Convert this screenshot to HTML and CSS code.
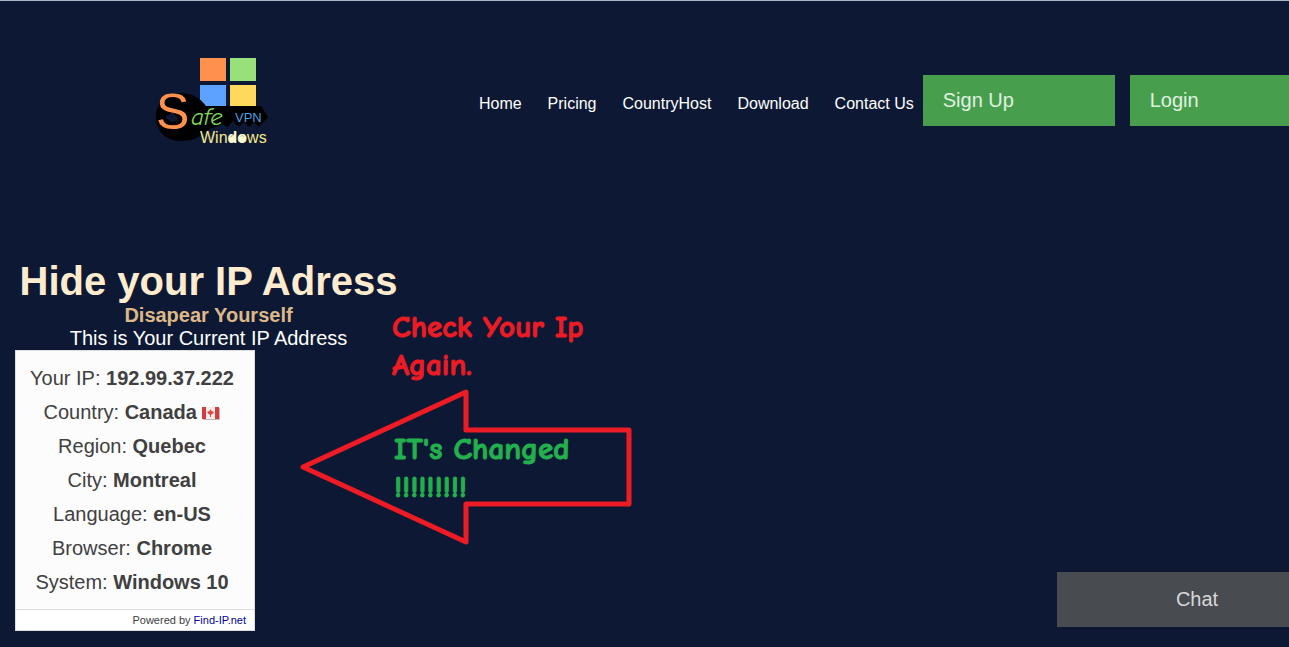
FILE: index.html
```html
<!DOCTYPE html>
<html lang="en">
<head>
<meta charset="utf-8">
<title>Safe VPN Windows</title>
<link rel="stylesheet" href="styles.css">
</head>
<body>
<header class="header">
  <a class="brand" href="#" aria-label="Safe VPN Windows">
    <svg class="logo" viewBox="0 0 140 120" width="140" height="120">
      <rect x="60" y="24" width="26" height="23" fill="#ff914d"/>
      <rect x="90" y="24" width="26" height="23" fill="#98e07a"/>
      <rect x="60" y="51" width="26" height="23" fill="#5ea2ff"/>
      <rect x="90" y="51" width="26" height="23" fill="#ffd95c"/>
      <path fill="#000" fill-rule="evenodd" d="M40 59C53 59 61 65 66 72H121L128 83L119 93L114 88L109 93L104 88L99 93L93 87L88 93L82 90L73 94C65 95 62 107 41 107C25 107 16 96 16 83C16 69 26 59 40 59ZM33 78L25 83L31 88L39 87Z"/>
      <text class="logo-s" x="16" y="95">S</text>
      <text class="logo-afe" x="51" y="91">afe</text>
      <text class="logo-vpn" x="95" y="88">VPN</text>
      <text class="logo-windows" x="60" y="109">Win<tspan class="logo-bold">do</tspan>ws</text>
      <circle cx="93" cy="105" r="3" fill="#fffbd0"/>
      <circle cx="102" cy="105" r="3" fill="#fffbd0"/>
    </svg>
  </a>
  <nav class="nav">
    <a href="#">Home</a>
    <a href="#">Pricing</a>
    <a href="#">CountryHost</a>
    <a href="#">Download</a>
    <a href="#">Contact Us</a>
  </nav>
  <div class="actions">
    <button class="action" type="button">Sign Up</button>
    <button class="action" type="button">Login</button>
  </div>
</header>
<main class="hero">
  <section class="intro">
    <h1 class="title">Hide your IP Adress</h1>
    <h2 class="subtitle">Disapear Yourself</h2>
    <p class="lead">This is Your Current IP Address</p>
    <div class="card">
      <ul class="facts">
        <li>Your IP: <b>192.99.37.222</b></li>
        <li>Country: <b>Canada</b>
          <svg class="flag" viewBox="0 0 18 13" width="18" height="13">
            <rect x="1" y="1" width="17" height="12" fill="#bbb"/>
            <rect width="17" height="12" fill="#f6eeee"/>
            <rect width="4" height="12" fill="#d93a3a"/>
            <rect x="13" width="4" height="12" fill="#d93a3a"/>
            <path d="M8.500 2L9.500 4L12 5L10 7.500H9V10H8V7.500H7L5 5L7.500 4Z" fill="#e04444"/>
          </svg></li>
        <li>Region: <b>Quebec</b></li>
        <li>City: <b>Montreal</b></li>
        <li>Language: <b>en-US</b></li>
        <li>Browser: <b>Chrome</b></li>
        <li>System: <b>Windows 10</b></li>
      </ul>
      <p class="credit">Powered by <a href="#">Find-IP.net</a></p>
    </div>
  </section>
  <aside class="callout">
    <p class="note note-check">Check Your Ip<br>Again.</p>
    <div class="arrow">
      <svg class="arrow-shape" viewBox="0 0 332 158" width="332" height="158">
        <path d="M3 79L166 4V42H329V116H166V154Z" fill="none" stroke="#ed1c24" stroke-width="5" stroke-linejoin="round"/>
      </svg>
      <p class="note note-changed">IT's Changed<br>!!!!!!!!!</p>
    </div>
  </aside>
</main>
<button class="chat" type="button">Chat</button>
</body>
</html>
```
FILE: styles.css
```css
* { box-sizing: border-box; }
body {
  margin: 0;
  min-height: 100vh;
  overflow: hidden;
  border-top: 1px solid #a9b3c6;
  background: #0d1934;
  color: #fff;
  font-family: "Liberation Sans", Arial, sans-serif;
  font-size: 20px;
  line-height: 23px;
}
h1, h2, p, ul { margin: 0; padding: 0; }
a { color: inherit; text-decoration: none; }
button { border: 0; font: inherit; cursor: pointer; }

.header {
  display: grid;
  grid-template-columns: 37% auto auto;
  justify-content: start;
  align-items: center;
  padding-top: 33px;
}
.brand { display: block; padding-left: 140px; }
.logo { display: block; }
.logo-s { font: 50px "Liberation Sans", sans-serif; fill: #ff914d; }
.logo-afe { font: italic 25px "Comic Sans MS", "Comic Neue", cursive; fill: #7ed957; }
.logo-vpn { font: 13px "Liberation Sans", sans-serif; fill: #4a9fe0; }
.logo-windows { font: 16px "Liberation Sans", sans-serif; fill: #f5e98a; }
.logo-bold { font-weight: bold; fill: #fffbd0; }
.nav {
  display: flex;
  gap: 26px;
  padding: 18px 9px 0 2px;
  font-size: 16px;
  white-space: nowrap;
}
.actions { display: flex; gap: 15px; padding-top: 12px; }
.action {
  flex: none;
  width: 192px;
  padding: 14px 20px;
  background: #479f4e;
  color: #e0f0e0;
  text-align: left;
}

.hero { position: relative; padding: 104px 15px 16px; }
.intro { max-width: 387px; text-align: center; }
.title { color: #ffebcd; font-size: 40px; line-height: 46px; white-space: nowrap; }
.subtitle { color: #deb887; font-size: 20px; }
.card {
  width: 240px;
  border: 1px solid #ddd;
  background: #fcfcfc;
  color: #404040;
}
.facts { padding: 10px 6px 10px 0; line-height: 34px; list-style: none; }
.flag { display: inline-block; vertical-align: -1px; }
.credit {
  padding-right: 8px;
  border-top: 1px solid #ddd;
  background: #fff;
  font-size: 11px;
  line-height: 20px;
  text-align: right;
}
.credit a { color: #0000a0; }

.callout { position: absolute; top: 154px; left: 300px; }
.note {
  font: bold 31px/38px "Comic Sans MS", "Comic Neue", Lato, sans-serif;
  -webkit-text-stroke: 1px currentColor;
  white-space: nowrap;
}
.note-check { padding-left: 92px; color: #ed1c24; }
.arrow { position: relative; padding-top: 4px; }
.arrow-shape { display: block; }
.note-changed { position: absolute; top: 46px; left: 94px; color: #22b14c; }

.chat {
  position: fixed;
  right: -48px;
  bottom: 20px;
  width: 280px;
  padding: 16px 20px;
  background: #484b4f;
  color: #d8d8da;
}
```
